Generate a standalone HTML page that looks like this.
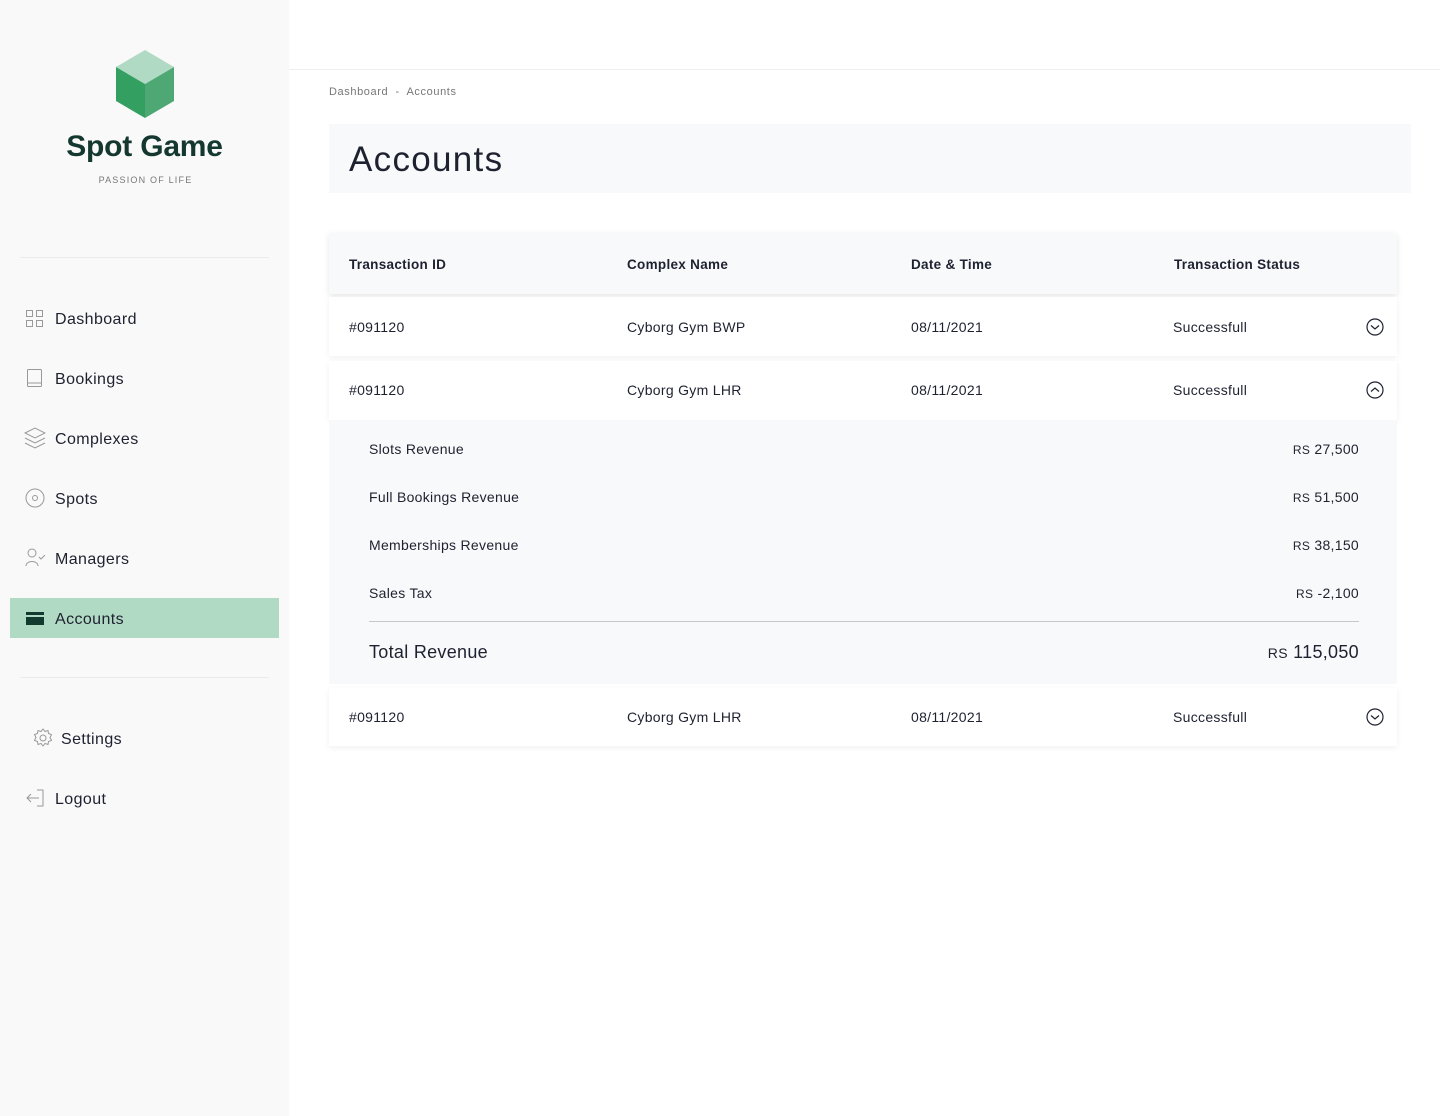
<!DOCTYPE html>
<html><head><style>
*{margin:0;padding:0;box-sizing:border-box}
body{width:1440px;height:1116px;font-family:"Liberation Sans",sans-serif;color:#1e2130;background:#fff;position:relative;overflow:hidden}
.sb{position:absolute;left:0;top:0;width:289px;height:1116px;background:#f9f9f9}
.abs{position:absolute}
.nav{position:absolute;left:55px;font-size:16px;letter-spacing:.4px;color:#1e2130}
.ic{position:absolute}
.hr{position:absolute;left:20px;width:249px;height:1px;background:#ececec}
.row{position:absolute;left:329px;width:1068px;background:#fff;box-shadow:0 2px 6px rgba(0,0,0,.06);font-size:14px;letter-spacing:.3px}
.row span{position:absolute}
.det{position:absolute;left:369px;font-size:14px;letter-spacing:.3px}
.amt{position:absolute;right:81px;font-size:14px;letter-spacing:.3px}
.rs{font-size:12px}
</style></head><body>
<div class="sb">
<svg class="ic" style="left:116px;top:50px" width="58" height="68" viewBox="0 0 58 68"><polygon points="29,0 58,17 29,34 0,17" fill="#b1dac4"/><polygon points="0,17 29,34 29,68 0,51" fill="#33a062"/><polygon points="58,17 29,34 29,68 58,51" fill="#4ea874"/></svg>
<div class="abs" style="left:0;width:289px;top:130px;text-align:center;font-size:30px;font-weight:bold;color:#143830;letter-spacing:-.2px">Spot Game</div>
<div class="abs" style="left:0;width:291px;top:175px;text-align:center;font-size:9px;color:#777;letter-spacing:1.2px">PASSION OF LIFE</div>
<div class="hr" style="top:257px"></div>
<svg class="ic" style="left:26px;top:310px" width="17" height="17" fill="none" stroke="#999"><rect x=".5" y=".5" width="6" height="6"/><rect x="10.5" y=".5" width="6" height="6"/><rect x=".5" y="10.5" width="6" height="6"/><rect x="10.5" y="10.5" width="6" height="6"/></svg>
<div class="nav" style="top:311px">Dashboard</div>
<svg class="ic" style="left:27px;top:369px" width="16" height="19" fill="none" stroke="#999"><rect x=".5" y=".5" width="14" height="17" rx="1"/><line x1=".5" y1="14" x2="14.5" y2="14"/></svg>
<div class="nav" style="top:371px">Bookings</div>
<svg class="ic" style="left:24px;top:427px" width="22" height="22" fill="none" stroke="#999"><path d="M1 6L11 1L21 6L11 11Z"/><path d="M1 11L11 16L21 11"/><path d="M1 16L11 21L21 16"/></svg>
<div class="nav" style="top:431px">Complexes</div>
<svg class="ic" style="left:25px;top:488px" width="20" height="20" fill="none" stroke="#999"><circle cx="10" cy="10" r="9"/><circle cx="10" cy="10" r="2.5"/></svg>
<div class="nav" style="top:491px">Spots</div>
<svg class="ic" style="left:25px;top:548px" width="21" height="18" fill="none" stroke="#999"><circle cx="7" cy="5" r="4"/><path d="M1 18C1 12 13 12 13 18"/><path d="M14 9L16 11L20 7"/></svg>
<div class="nav" style="top:551px">Managers</div>
<div class="abs" style="left:10px;top:598px;width:269px;height:40px;background:#b1dac4"></div>
<svg class="ic" style="left:26px;top:612px" width="18" height="13"><rect width="18" height="13" fill="#123b30"/><rect y="3" width="18" height="2" fill="#b1dac4"/></svg>
<div class="nav" style="top:611px">Accounts</div>
<div class="hr" style="top:677px"></div>
<svg class="ic" style="left:33px;top:728px" width="20" height="20" fill="none" stroke="#999"><circle cx="10" cy="10" r="3"/><path d="M10 1l2 2.5 3-1 .5 3 3 1-1.5 3 1.5 3-3 1-.5 3-3-1-2 2.5-2-2.5-3 1-.5-3-3-1 1.5-3-1.5-3 3-1 .5-3 3 1z"/></svg>
<div class="nav" style="left:61px;top:731px">Settings</div>
<svg class="ic" style="left:26px;top:789px" width="18" height="18" fill="none" stroke="#999"><path d="M11 1H17V17H11"/><path d="M13 9H1M5 5L1 9L5 13"/></svg>
<div class="nav" style="top:791px">Logout</div>
</div>
<div class="abs" style="left:289px;top:69px;width:1151px;height:1px;background:#eee"></div>
<div class="abs" style="left:329px;top:86px;font-size:11px;color:#777;letter-spacing:.6px">Dashboard &nbsp;-&nbsp; Accounts</div>
<div class="abs" style="left:329px;top:124px;width:1082px;height:69px;background:#f8f9fa"></div>
<div class="abs" style="left:349px;top:140px;font-size:35px;color:#1e2130;letter-spacing:1.3px">Accounts</div>
<div class="row" style="top:233px;height:61px;background:#f8f9fa;box-shadow:0 2px 6px rgba(0,0,0,.1);font-weight:bold;font-size:13.5px">
<span style="left:20px;top:24px">Transaction ID</span><span style="left:298px;top:24px">Complex Name</span><span style="left:582px;top:24px">Date &amp; Time</span><span style="left:845px;top:24px">Transaction Status</span></div>
<div class="row" style="top:297px;height:59px">
<span style="left:20px;top:22px">#091120</span><span style="left:298px;top:22px">Cyborg Gym BWP</span><span style="left:582px;top:22px">08/11/2021</span><span style="left:844px;top:22px">Successfull</span>
<svg style="position:absolute;left:1037px;top:21px" width="18" height="18" fill="none" stroke="#1e2130" stroke-width="1.2"><circle cx="9" cy="9" r="8"/><path d="M5 7.5L9 11L13 7.5"/></svg></div>
<div class="row" style="top:361px;height:59px">
<span style="left:20px;top:21px">#091120</span><span style="left:298px;top:21px">Cyborg Gym LHR</span><span style="left:582px;top:21px">08/11/2021</span><span style="left:844px;top:21px">Successfull</span>
<svg style="position:absolute;left:1037px;top:20px" width="18" height="18" fill="none" stroke="#1e2130" stroke-width="1.2"><circle cx="9" cy="9" r="8"/><path d="M5 10.5L9 7L13 10.5"/></svg></div>
<div class="abs" style="left:329px;top:420px;width:1068px;height:264px;background:#f8f9fa"></div>
<div class="det" style="top:441px">Slots Revenue</div><div class="amt" style="top:441px"><span class="rs">RS</span> 27,500</div>
<div class="det" style="top:489px">Full Bookings Revenue</div><div class="amt" style="top:489px"><span class="rs">RS</span> 51,500</div>
<div class="det" style="top:537px">Memberships Revenue</div><div class="amt" style="top:537px"><span class="rs">RS</span> 38,150</div>
<div class="det" style="top:585px">Sales Tax</div><div class="amt" style="top:585px"><span class="rs">RS</span> -2,100</div>
<div class="abs" style="left:369px;top:621px;width:990px;height:1px;background:#c8c8c8"></div>
<div class="det" style="top:642px;font-size:18px">Total Revenue</div><div class="amt" style="top:642px;font-size:18px"><span style="font-size:14px">RS</span> 115,050</div>
<div class="row" style="top:688px;height:58px">
<span style="left:20px;top:21px">#091120</span><span style="left:298px;top:21px">Cyborg Gym LHR</span><span style="left:582px;top:21px">08/11/2021</span><span style="left:844px;top:21px">Successfull</span>
<svg style="position:absolute;left:1037px;top:20px" width="18" height="18" fill="none" stroke="#1e2130" stroke-width="1.2"><circle cx="9" cy="9" r="8"/><path d="M5 7.5L9 11L13 7.5"/></svg></div>
</body></html>
